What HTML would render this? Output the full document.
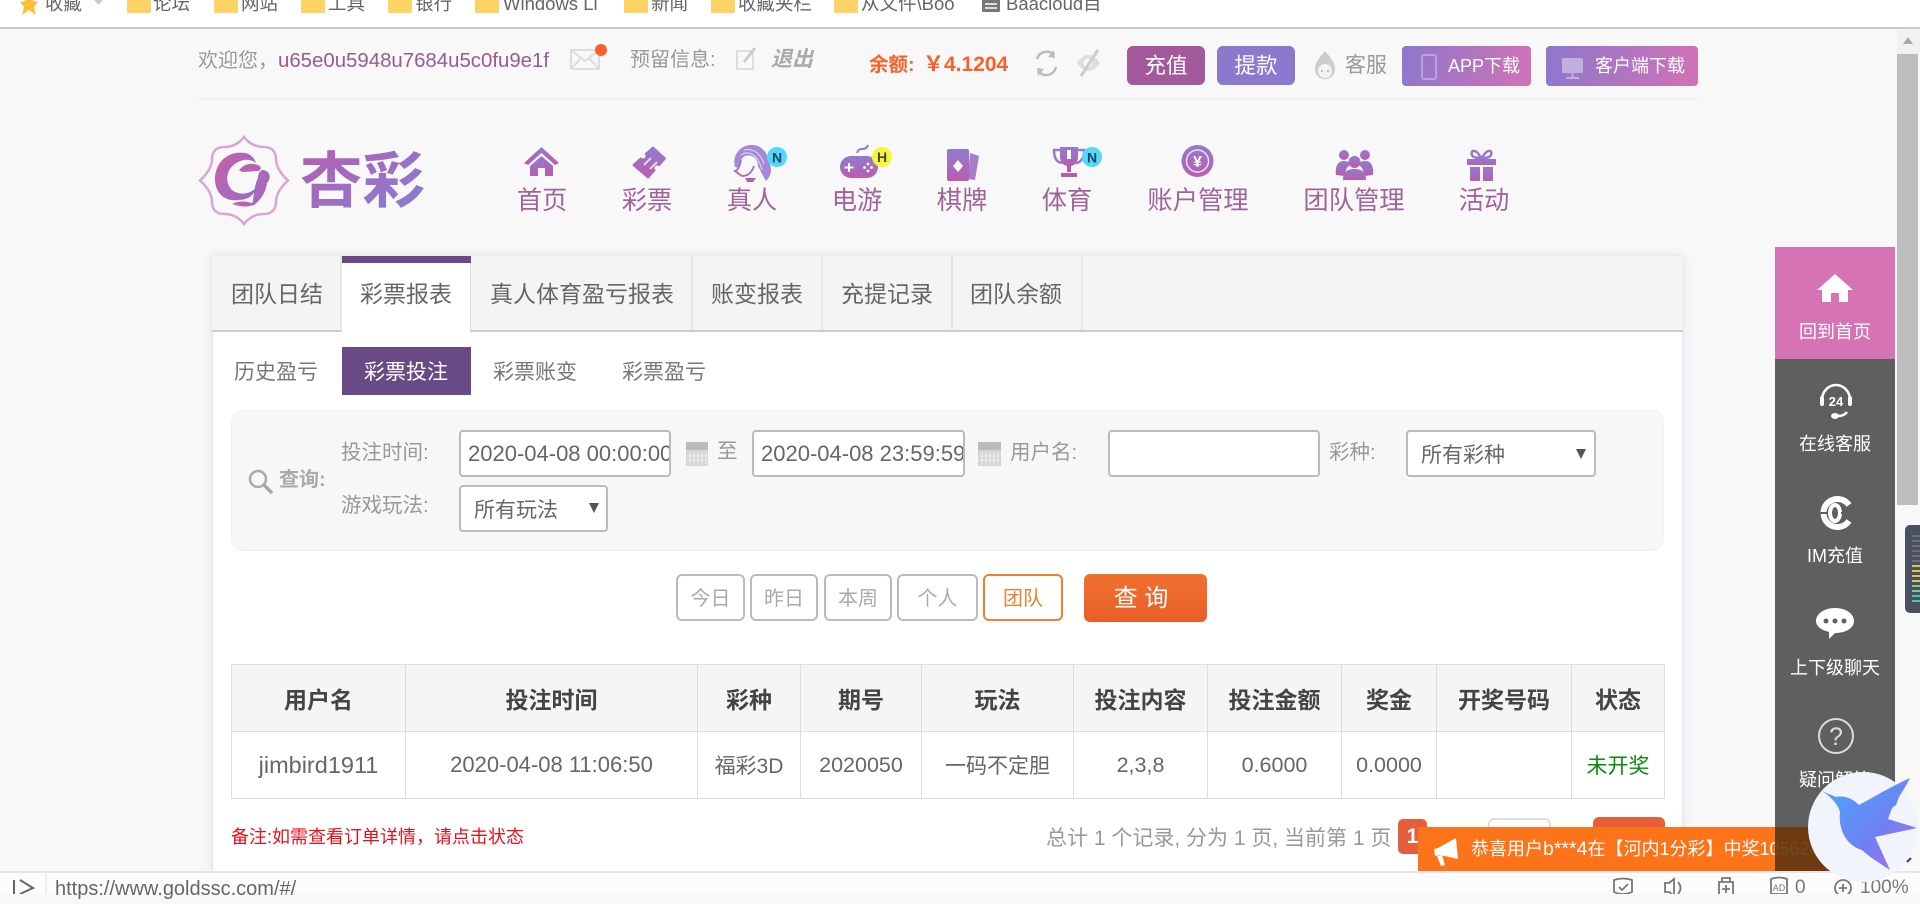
<!DOCTYPE html>
<html lang="zh-CN">
<head>
<meta charset="utf-8">
<title>杏彩</title>
<style>
html,body{margin:0;padding:0;width:1920px;height:894px;overflow:hidden;background:#f8f8f8;font-family:"Liberation Sans","Noto Sans CJK SC",sans-serif;}
.a{position:absolute;box-sizing:border-box;}
.t{position:absolute;white-space:nowrap;line-height:30px;height:30px;}
.c{text-align:center;}
.in{position:absolute;box-sizing:border-box;background:#fff;border:2px solid #bbb;border-radius:4px;height:47px;top:430px;color:#666;font-size:22px;line-height:43px;white-space:nowrap;overflow:hidden;padding-left:7px;}
.sel{font-size:21px;line-height:47px;padding-left:13px;}
.btn{position:absolute;box-sizing:border-box;top:574px;height:47px;background:#fff;border:2px solid #bbb;border-radius:6px;color:#aaa;font-size:20px;line-height:46px;text-align:center;}
table{position:absolute;left:231px;top:664px;width:1433px;border-collapse:collapse;table-layout:fixed;}
td,th{border:1px solid #ddd;text-align:center;padding:0;height:66px;white-space:nowrap;}
th{background:#f5f5f5;font-size:23px;color:#444;font-weight:bold;}
td{font-size:21.5px;color:#666;background:#fff;}
</style>
</head>
<body>
<!-- bookmark bar -->
<div class="a" style="left:0;top:0;width:1920px;height:27px;background:#fff;"></div>
<div class="a" style="left:0;top:27px;width:1920px;height:2px;background:#c9c9c9;"></div>
<div style="color:#666;font-size:18.5px;">
<span class="t" style="left:45px;top:-11px;">收藏</span>
<span class="t" style="left:153px;top:-11px;">论坛</span>
<span class="t" style="left:241px;top:-11px;">网站</span>
<span class="t" style="left:328px;top:-11px;">工具</span>
<span class="t" style="left:415px;top:-11px;">银行</span>
<span class="t" style="left:503px;top:-11px;">Windows Li</span>
<span class="t" style="left:651px;top:-11px;">新闻</span>
<span class="t" style="left:738px;top:-11px;">收藏夹栏</span>
<span class="t" style="left:861px;top:-11px;">从文件\Boo</span>
<span class="t" style="left:1006px;top:-11px;">Baacloud目</span>
</div>

<!-- top row -->
<span class="t" style="left:198px;top:46px;font-size:20px;color:#999;">欢迎您，</span>
<span class="t" style="left:278px;top:46px;font-size:20.4px;color:#9b5a8f;">u65e0u5948u7684u5c0fu9e1f</span>
<span class="t" style="left:630px;top:45px;font-size:20px;color:#999;">预留信息:</span>
<span class="t" style="left:771px;top:45px;font-size:21px;color:#aaa;font-weight:bold;font-style:italic;">退出</span>
<span class="t" style="left:869px;top:50px;font-size:19.500px;color:#f9602a;font-weight:bold;">余额:</span>
<span class="t" style="left:923px;top:50px;font-size:21px;color:#f9602a;font-weight:bold;">￥4.1204</span>
<div class="a" style="left:1127px;top:46px;width:78px;height:39px;background:#a2589a;border-radius:6px;color:#fff;font-size:21.500px;line-height:41px;text-align:center;">充值</div>
<div class="a" style="left:1217px;top:46px;width:78px;height:39px;background:#8c78cc;border-radius:6px;color:#fff;font-size:21.500px;line-height:41px;text-align:center;">提款</div>
<span class="t" style="left:1345px;top:51px;font-size:21px;color:#999;">客服</span>
<div class="a" style="left:1402px;top:46px;width:129px;height:40px;background:linear-gradient(100deg,#8c78cc,#d272b6);border-radius:4px;color:#fff;font-size:18px;line-height:40px;padding-left:46px;white-space:nowrap;">APP下载</div>
<div class="a" style="left:1546px;top:46px;width:152px;height:40px;background:linear-gradient(100deg,#8c78cc,#d272b6);border-radius:4px;color:#fff;font-size:18px;line-height:40px;padding-left:49px;white-space:nowrap;">客户端下载</div>
<div class="a" style="left:198px;top:98px;width:1500px;height:2px;background:#efefef;"></div>

<!-- nav text -->
<div style="color:#a0649a;font-size:25.300px;">
<span class="t c" style="left:492px;width:100px;top:186px;">首页</span>
<span class="t c" style="left:597px;width:100px;top:186px;">彩票</span>
<span class="t c" style="left:702px;width:100px;top:186px;">真人</span>
<span class="t c" style="left:807px;width:100px;top:186px;">电游</span>
<span class="t c" style="left:912px;width:100px;top:186px;">棋牌</span>
<span class="t c" style="left:1017px;width:100px;top:186px;">体育</span>
<span class="t c" style="left:1138px;width:120px;top:186px;">账户管理</span>
<span class="t c" style="left:1294px;width:120px;top:186px;">团队管理</span>
<span class="t c" style="left:1434px;width:100px;top:186px;">活动</span>
</div>

<!-- card -->
<div class="a" style="left:212px;top:256px;width:1471px;height:615px;background:#fff;box-shadow:0 0 7px rgba(190,140,210,.3);border-left:1px solid #ece4f0;border-right:1px solid #ece4f0;"></div>
<div class="a" style="left:212px;top:256px;width:1471px;height:76px;background:#f5f4f3;border-bottom:2px solid #ccc;"></div>
<div class="a" style="left:342px;top:256px;width:129px;height:77px;background:#fff;border-right:1px solid #ddd;"></div>
<div class="a" style="left:342px;top:256px;width:129px;height:7px;background:#6a4a85;"></div>
<div class="a" style="left:340px;top:256px;width:2px;height:75px;background:#e6e6e6;"></div>
<div class="a" style="left:691px;top:256px;width:2px;height:74px;background:#e6e6e6;"></div>
<div class="a" style="left:821px;top:256px;width:2px;height:74px;background:#e6e6e6;"></div>
<div class="a" style="left:951px;top:256px;width:2px;height:74px;background:#e6e6e6;"></div>
<div class="a" style="left:1081px;top:256px;width:2px;height:74px;background:#e6e6e6;"></div>
<div style="font-size:23px;color:#666;">
<span class="t" style="left:231px;top:279px;">团队日结</span>
<span class="t" style="left:360px;top:279px;">彩票报表</span>
<span class="t" style="left:490px;top:279px;">真人体育盈亏报表</span>
<span class="t" style="left:711px;top:279px;">账变报表</span>
<span class="t" style="left:841px;top:279px;">充提记录</span>
<span class="t" style="left:970px;top:279px;">团队余额</span>
</div>

<div class="a" style="left:342px;top:347px;width:129px;height:48px;background:#6a4a85;"></div>
<div style="font-size:21px;color:#777;">
<span class="t" style="left:234px;top:358px;">历史盈亏</span>
<span class="t" style="left:364px;top:358px;color:#fff;">彩票投注</span>
<span class="t" style="left:493px;top:358px;">彩票账变</span>
<span class="t" style="left:622px;top:358px;">彩票盈亏</span>
</div>

<!-- search -->
<div class="a" style="left:231px;top:410px;width:1433px;height:141px;background:#f7f7f7;border:1px solid #f1f1f1;border-radius:12px;"></div>
<span class="t" style="left:279px;top:465px;font-size:20px;color:#aaa;font-weight:bold;">查询:</span>
<div style="font-size:20.500px;color:#999;">
<span class="t" style="left:341px;top:438px;">投注时间:</span>
<span class="t" style="left:717px;top:437px;">至</span>
<span class="t" style="left:1010px;top:438px;">用户名:</span>
<span class="t" style="left:1329px;top:438px;">彩种:</span>
<span class="t" style="left:341px;top:491px;">游戏玩法:</span>
</div>
<div class="in" style="left:459px;width:212px;">2020-04-08 00:00:00</div>
<div class="in" style="left:752px;width:213px;">2020-04-08 23:59:59</div>
<div class="in" style="left:1108px;width:212px;"></div>
<div class="in sel" style="left:1406px;width:190px;">所有彩种</div>
<div class="in sel" style="left:459px;width:149px;top:485px;">所有玩法</div>

<!-- buttons -->
<div class="btn" style="left:676px;width:69px;">今日</div>
<div class="btn" style="left:750px;width:68px;">昨日</div>
<div class="btn" style="left:824px;width:68px;">本周</div>
<div class="btn" style="left:897px;width:81px;">个人</div>
<div class="btn" style="left:983px;width:80px;border-color:#ee8030;color:#ee8030;">团队</div>
<div class="a" style="left:1084px;top:574px;width:123px;height:48px;background:linear-gradient(#f0702f,#e85f28);border-radius:6px;color:#fff;font-size:24px;line-height:50px;text-align:center;padding-right:9px;">查 询</div>

<!-- table -->
<table>
<colgroup><col style="width:174px"><col style="width:292px"><col style="width:103px"><col style="width:121px"><col style="width:152px"><col style="width:134px"><col style="width:134px"><col style="width:95px"><col style="width:135px"><col style="width:93px"></colgroup>
<tr><th>用户名</th><th>投注时间</th><th>彩种</th><th>期号</th><th>玩法</th><th>投注内容</th><th>投注金额</th><th>奖金</th><th>开奖号码</th><th>状态</th></tr>
<tr><td style="font-size:23.500px;">jimbird1911</td><td style="font-size:22px;">2020-04-08 11:06:50</td><td style="font-size:21px;">福彩3D</td><td>2020050</td><td style="font-size:21px;">一码不定胆</td><td>2,3,8</td><td>0.6000</td><td>0.0000</td><td></td><td style="color:#0a8a0a;font-size:21px;">未开奖</td></tr>
</table>

<span class="t" style="left:231px;top:822px;font-size:18px;color:#e8101a;">备注:如需查看订单详情，请点击状态</span>
<span class="t" style="left:1046px;top:824px;font-size:21px;color:#999;">总计 1 个记录, 分为 1 页, 当前第 1 页</span>
<div class="a" style="left:1398px;top:819px;width:29px;height:35px;background:#e5603a;border-radius:5px;color:#fff;font-size:21px;font-weight:bold;line-height:35px;text-align:center;">1</div>
<div class="a" style="left:1488px;top:818px;width:63px;height:40px;background:#fff;border:2px solid #ddd;border-radius:6px;"></div>
<div class="a" style="left:1593px;top:817px;width:72px;height:40px;background:#e5603a;border-radius:6px;"></div>

<!-- sidebar -->
<div class="a" style="left:1775px;top:247px;width:120px;height:112px;background:#d673b5;"></div>
<div class="a" style="left:1775px;top:359px;width:120px;height:512px;background:#5f5f5f;"></div>
<div style="color:#fff;font-size:18px;">
<span class="t c" style="left:1775px;width:120px;top:317px;">回到首页</span>
<span class="t c" style="left:1775px;width:120px;top:429px;">在线客服</span>
<span class="t c" style="left:1775px;width:120px;top:541px;">IM充值</span>
<span class="t c" style="left:1775px;width:120px;top:653px;">上下级聊天</span>
<span class="t c" style="left:1775px;width:120px;top:765px;">疑问解答</span>
</div>

<!-- orange notice -->
<div class="a" style="left:1418px;top:827px;width:412px;height:44px;background:#fd7319;"></div>
<span class="t" style="left:1471px;top:834px;font-size:18px;color:#fff;">恭喜用户<span style="font-size:19.500px;">b***4</span>在【河内1分彩】中奖1056280</span>
<div class="a" style="left:1775px;top:827px;width:56px;height:44px;background:rgba(95,52,16,.9);"></div>

<!-- scrollbar -->
<div class="a" style="left:1897px;top:29px;width:23px;height:25px;background:#f1f1f1;"></div>
<div class="a" style="left:1897px;top:54px;width:21px;height:451px;background:#bdbdbd;"></div>
<div class="a" style="left:1905px;top:525px;width:15px;height:88px;background:#4a5060;border-radius:5px 0 0 5px;"></div>

<!-- status bar -->
<div class="a" style="left:0;top:871px;width:1920px;height:2px;background:#e6e6e6;"></div>
<div class="a" style="left:0;top:873px;width:1920px;height:21px;background:#fcfcfc;"></div>
<span class="t" style="left:55px;top:874px;font-size:20px;color:#666;">https://www.goldssc.com/#/</span>
<span class="t" style="left:1795px;top:873px;font-size:19px;color:#777;">0</span>
<span class="t" style="left:1860px;top:873px;font-size:19px;color:#777;">100%</span>

<!-- icons -->
<svg class="a" style="left:0;top:0;" width="1920" height="894" viewBox="0 0 1920 894" font-family="Liberation Sans, sans-serif">
<defs>
<linearGradient id="g" x1="0" y1="0" x2="0" y2="1"><stop offset="0" stop-color="#8f7cd0"/><stop offset="1" stop-color="#bb5cae"/></linearGradient>
<linearGradient id="lg" x1="0" y1="0" x2="1" y2="1"><stop offset="0" stop-color="#b85cae"/><stop offset="1" stop-color="#8480d6"/></linearGradient>
<linearGradient id="bird" x1="0" y1="0" x2="1" y2="1"><stop offset="0" stop-color="#4aa8fa"/><stop offset=".6" stop-color="#6f80f4"/><stop offset="1" stop-color="#b06ef0"/></linearGradient>
<linearGradient id="em" x1="0" y1="0" x2="1" y2="1"><stop offset="0" stop-color="#c560a8"/><stop offset="1" stop-color="#9a6cc6"/></linearGradient>
</defs>

<!-- bookmarks icons -->
<path d="M29 -6 L33 4 L38 5 L34 10 L36 18 L29 13 L22 18 L24 10 L20 5 L25 4Z" fill="#fbbf3a" transform="translate(0,-3)"/>
<path d="M94 0h9l-4.500 5z" fill="#ccc"/>
<g fill="#fcd364">
<rect x="127" y="-2" width="24" height="15" rx="1"/><rect x="214" y="-2" width="24" height="15" rx="1"/><rect x="301" y="-2" width="24" height="15" rx="1"/><rect x="388" y="-2" width="24" height="15" rx="1"/><rect x="475" y="-2" width="24" height="15" rx="1"/><rect x="624" y="-2" width="24" height="15" rx="1"/><rect x="711" y="-2" width="24" height="15" rx="1"/><rect x="834" y="-2" width="24" height="15" rx="1"/>
</g>
<rect x="982" y="-2" width="18" height="14" rx="1" fill="#777"/><path d="M985 4h12M985 8h12" stroke="#fff" stroke-width="1.500"/>

<!-- top row icons -->
<g fill="none" stroke="#ddd" stroke-width="2"><rect x="571" y="50" width="28" height="19"/><path d="M571 50 L585 61 L599 50M571 69 L581 58M599 69 L589 58"/></g>
<circle cx="601" cy="50" r="6" fill="#f9602a"/>
<rect x="737" y="51" width="16" height="18" fill="none" stroke="#ddd" stroke-width="2"/><path d="M744 62 L755 48" stroke="#ccc" stroke-width="3"/>
<g fill="none" stroke="#bbb" stroke-width="2.500"><path d="M1037 59 A10 10 0 0 1 1054 55"/><path d="M1056 67 A10 10 0 0 1 1039 72"/></g>
<path d="M1054 50 L1055 58 L1048 57Z M1038 76 L1037 68 L1044 69Z" fill="#bbb"/>
<path d="M1077 63 Q1088 47 1100 63 Q1088 79 1077 63Z" fill="#ddd"/><circle cx="1088" cy="63" r="4.500" fill="#f8f8f8"/><path d="M1081 76 L1098 50" stroke="#ccc" stroke-width="3"/>
<path d="M1325 51 C1331 58 1335 63 1335 69 C1335 75 1331 79 1325 79 C1319 79 1315 75 1315 69 C1315 63 1319 58 1325 51Z" fill="#ccc"/><circle cx="1325" cy="71" r="7" fill="#f3f3f3"/><circle cx="1322" cy="71" r="1" fill="#aaa"/><circle cx="1328" cy="71" r="1" fill="#aaa"/>
<g fill="none" stroke="#b9a3dd" stroke-width="2"><rect x="1422" y="55" width="14" height="24" rx="2"/></g>
<g><rect x="1562" y="58" width="21" height="15" rx="1" fill="#c3aee0"/><path d="M1572.500 73v4M1566 78h13" stroke="#c3aee0" stroke-width="2"/></g>

<!-- logo -->
<path d="M244 137 C250 145 258 147 264 147 C272 147 276 152 276 159 C276 168 282 175 288 180.500 C282 186 276 193 276 202 C276 209 272 214 264 214 C258 214 250 216 244 224 C238 216 230 214 224 214 C216 214 212 209 212 202 C212 193 206 186 200 180.500 C206 175 212 168 212 159 C212 152 216 147 224 147 C230 147 238 145 244 137Z" fill="none" stroke="#d9a6d4" stroke-width="2.500"/>
<path d="M245 153 C226 150 214 165 215 181 C216 194 226 202 238 200 C250 200 254 194 256 188 C250 194 240 196 232 190 C224 182 226 168 238 162 C246 158 252 160 256 163 C254 157 250 154 245 153Z" fill="url(#em)"/>
<path d="M239 170 Q248 160 260 166 Q262 170 258 171 L242 172Z" fill="#b464b0"/>
<path d="M262 170 C270 170 272 178 267 183 C266 192 260 202 252 206 C254 196 254 186 258 178 C258 175 259 172 262 170Z" fill="#a868bc"/>
<path d="M232 204 Q242 199 255 204 Q246 209 232 204Z" fill="#b866b4"/>
<text x="300" y="202" font-size="61" font-weight="bold" fill="url(#lg)" font-family="Noto Sans CJK SC, sans-serif" textLength="125" lengthAdjust="spacingAndGlyphs">杏彩</text>

<!-- nav icons -->
<path d="M524 163 L541.500 147 L559 163 L555 165 L541.500 153 L528 165Z" fill="url(#g)"/>
<path d="M530 166 L541.500 156 L553 166 V176 H545 V168 H538 V176 H530Z" fill="url(#g)"/>

<path d="M633.500 165 L653 147.500 L665 158.500 L648 177.500Z" fill="url(#g)" stroke="url(#g)" stroke-width="2" stroke-linejoin="round"/>
<circle cx="643" cy="156" r="2.500" fill="#f8f8f8"/><circle cx="657" cy="168" r="2.500" fill="#f8f8f8"/>
<path d="M644 165 L651 158M650 169 L657 162" stroke="#efe0f2" stroke-width="1.800"/>

<path d="M750 145 C762 144 768 154 769 162 C772 168 772 175 766 181 C763 176 760 170 758 166 C758 158 752 154 745 156 C741 158 740 163 739 168 L735 167 C732 158 738 146 750 145Z" fill="#a48ad6"/>
<g fill="none" stroke="#e6dcf4" stroke-width="1"><path d="M744 150 C752 148 760 152 764 164"/><path d="M741 155 C748 150 758 154 762 170"/></g>
<g fill="none" stroke="url(#g)" stroke-width="1.800"><path d="M741 160 C740 166 738 170 735 171 L739 174 L742 176 C748 176 752 172 754 166"/></g>
<path d="M745 178h11l-3 4h-6z" fill="#b45cae"/>
<circle cx="777" cy="157" r="10" fill="#55d8f8"/><text x="777" y="162.500" font-size="14" font-weight="bold" text-anchor="middle" fill="#224466">N</text>

<rect x="840" y="156" width="38" height="22" rx="11" fill="url(#g)"/>
<path d="M849 163v9M844.500 167.500h9" stroke="#fff" stroke-width="2"/><circle cx="868" cy="164" r="1.400" fill="#fff"/><circle cx="868" cy="171" r="1.400" fill="#fff"/><circle cx="864.500" cy="167.500" r="1.400" fill="#fff"/><circle cx="871.500" cy="167.500" r="1.400" fill="#fff"/>
<path d="M857 153 q1 -4 5 -4 q5 0 6 -4" fill="none" stroke="#8f7cd0" stroke-width="2"/>
<circle cx="882" cy="157" r="10" fill="#f5f53a"/><text x="882" y="162" font-size="14" font-weight="bold" text-anchor="middle" fill="#444">H</text>

<path d="M970 153 L979 156 L975 180 L968 179Z" fill="#a77cc8"/>
<rect x="947" y="149" width="22" height="32" rx="2" fill="url(#g)"/>
<path d="M958 160 L963 166 L958 172 L953 166Z" fill="#fff"/>

<path d="M1060 147 H1078 V156 Q1078 166 1069 166 Q1060 166 1060 156Z" fill="url(#g)"/>
<path d="M1060 150 H1054 Q1054 162 1062 163M1078 150 H1084 Q1084 162 1076 163" fill="none" stroke="#9a78c8" stroke-width="2.500"/>
<path d="M1067 150h4v9h-4z" fill="#fff"/>
<path d="M1067 165h4v7h-4zM1061 173h16v4h-16z" fill="#b45cae"/>
<circle cx="1092" cy="157" r="10" fill="#55d8f8"/><text x="1092" y="162.500" font-size="14" font-weight="bold" text-anchor="middle" fill="#224466">N</text>

<circle cx="1197.500" cy="161" r="16" fill="url(#g)"/><circle cx="1197.500" cy="161" r="11" fill="none" stroke="#efdff2" stroke-width="1.500"/>
<text x="1197.500" y="167" font-size="16" font-weight="bold" text-anchor="middle" fill="#fff">¥</text>

<g fill="url(#g)"><circle cx="1344" cy="155" r="5"/><circle cx="1365" cy="155" r="5"/><path d="M1336 175 C1335 166 1338 161 1344 161 C1348 161 1350 163 1350 165 C1346 168 1345 172 1345 176Z"/><path d="M1373 175 C1374 166 1371 161 1365 161 C1361 161 1359 163 1359 165 C1363 168 1364 172 1364 176Z"/><circle cx="1354.500" cy="162" r="6"/><path d="M1343 180 C1343 172 1347 169 1354.500 169 C1362 169 1366 172 1366 180Z"/></g>

<g fill="url(#g)"><rect x="1467" y="159" width="29" height="6"/><rect x="1470" y="167" width="10" height="14"/><rect x="1483" y="167" width="10" height="14"/></g>
<g fill="none" stroke="#9a78c8" stroke-width="2.500"><path d="M1481 158 C1476 148 1470 150 1472 155 C1473 158 1478 158 1481 158Z"/><path d="M1482 158 C1487 148 1493 150 1491 155 C1490 158 1485 158 1482 158Z"/></g>

<!-- search icons -->
<circle cx="258" cy="479" r="8" fill="none" stroke="#aaa" stroke-width="2.500"/><path d="M264 485 L272 493" stroke="#aaa" stroke-width="3.500"/>
<g><rect x="686" y="444" width="22" height="22" fill="#d5d5d5"/><rect x="686" y="442" width="22" height="8" fill="#bbb"/><path d="M690 452v13M694 452v13M698 452v13M702 452v13M706 452v13M687 456h20M687 460h20" stroke="#eee" stroke-width="1"/></g>
<g transform="translate(292,0)"><rect x="686" y="444" width="23" height="22" fill="#d5d5d5"/><rect x="686" y="442" width="23" height="8" fill="#bbb"/><path d="M690 452v13M694 452v13M698 452v13M702 452v13M706 452v13M687 456h20M687 460h20" stroke="#eee" stroke-width="1"/></g>
<path d="M1576 449h10l-5 10z" fill="#555"/>
<path d="M589 503h10l-5 10z" fill="#555"/>

<!-- sidebar icons -->
<path d="M1835 274 L1853 290 H1848 V302 H1839 V293 H1831 V302 H1822 V290 H1817Z" fill="#fff"/>
<g fill="none" stroke="#fff" stroke-width="2.500"><path d="M1822 400 A14 15 0 0 1 1850 400"/><path d="M1847 412 Q1844 416 1838 416"/></g>
<rect x="1820" y="396" width="4" height="10" rx="2" fill="#fff"/><rect x="1848" y="396" width="4" height="10" rx="2" fill="#fff"/><ellipse cx="1835" cy="416" rx="4" ry="3" fill="#fff"/>
<text x="1836" y="406" font-size="13" font-weight="bold" text-anchor="middle" fill="#fff">24</text>
<path d="M1849 505 A14 14 0 1 0 1849 521" fill="none" stroke="#fff" stroke-width="6"/>
<ellipse cx="1835" cy="513" rx="5" ry="8" fill="none" stroke="#fff" stroke-width="4"/>
<path d="M1820 513h8M1841 513h10" stroke="#5f5f5f" stroke-width="2"/>
<path d="M1835 608 C1846 608 1854 614 1854 621 C1854 628 1846 633 1835 633 L1829 639 L1829 632 C1821 630 1816 626 1816 621 C1816 614 1824 608 1835 608Z" fill="#fff"/>
<circle cx="1826" cy="621" r="2.500" fill="#5f5f5f"/><circle cx="1835" cy="621" r="2.500" fill="#5f5f5f"/><circle cx="1844" cy="621" r="2.500" fill="#5f5f5f"/>
<circle cx="1836" cy="736" r="17" fill="none" stroke="#ddd" stroke-width="2"/>
<text x="1836" y="745" font-size="25" text-anchor="middle" fill="#ddd">?</text>

<!-- notice megaphone -->
<path d="M1438 848 L1456 838 L1458 859 L1440 855Z" fill="#fff"/><path d="M1434 849l5 -1 1 7 -5 1z" fill="#fff"/><path d="M1437 856 L1441 866 L1445 865 L1442 855Z" fill="#fff"/>

<!-- scroll arrow and widget -->
<path d="M1903 44l5 -7 5 7z" fill="#aaa"/>
<g fill="#69707e"><rect x="1912" y="535" width="8" height="2"/><rect x="1912" y="540" width="8" height="2"/><rect x="1912" y="545" width="8" height="2"/><rect x="1912" y="550" width="8" height="2"/><rect x="1912" y="555" width="8" height="2"/><rect x="1912" y="560" width="8" height="2"/></g>
<g fill="#d6c84a"><rect x="1912" y="565" width="8" height="2"/><rect x="1912" y="570" width="8" height="2"/><rect x="1912" y="575" width="8" height="2"/><rect x="1912" y="580" width="8" height="2"/></g>
<g fill="#7fc88a"><rect x="1912" y="585" width="8" height="2"/><rect x="1912" y="590" width="8" height="2"/></g>
<g fill="#4cc4b4"><rect x="1912" y="595" width="8" height="2"/><rect x="1912" y="600" width="8" height="2"/></g>

<!-- status bar icons -->
<path d="M14 880v14M20 880 L33 888 L20 894" fill="none" stroke="#666" stroke-width="2"/>
<path d="M46 874v20" stroke="#e5e5e5" stroke-width="1"/>
<g fill="none" stroke="#777" stroke-width="1.800">
<path d="M1614 880 Q1623 877 1632 880 V892 Q1628 894 1623 894 Q1618 894 1614 892Z"/><path d="M1619 887 L1622 890 L1628 884"/>
<path d="M1665 884v8h4l5 4v-17l-5 4h-4Z"/><path d="M1678 882 Q1683 888 1678 894"/>
<path d="M1719 894v-12h14v12M1722 882v-4h8v4M1726 885v8M1722 889h8"/>
<path d="M1771 879 Q1779 876 1787 879 V894 H1771Z"/>
<circle cx="1843" cy="888" r="8"/><path d="M1843 884v8M1839 888h8"/>
</g>
<text x="1779" y="891" font-size="9" text-anchor="middle" fill="#777">AD</text>

<!-- bird -->
<circle cx="1863" cy="827" r="55" fill="#f1f4fb"/>
<path d="M1822 791 L1836 797 C1846 795 1854 800 1859 805 C1872 798 1892 786 1910 778 C1906 786 1902 792 1899 797 L1896 805 L1892 808 L1888 819 L1917 828 L1875 837 L1890 870 C1878 862 1868 856 1862 850 C1848 846 1838 832 1840 812 C1838 804 1830 796 1822 791Z" fill="url(#bird)"/>
<path d="M1907 862l4 -4" stroke="#444" stroke-width="2"/>
</svg>
</body>
</html>
